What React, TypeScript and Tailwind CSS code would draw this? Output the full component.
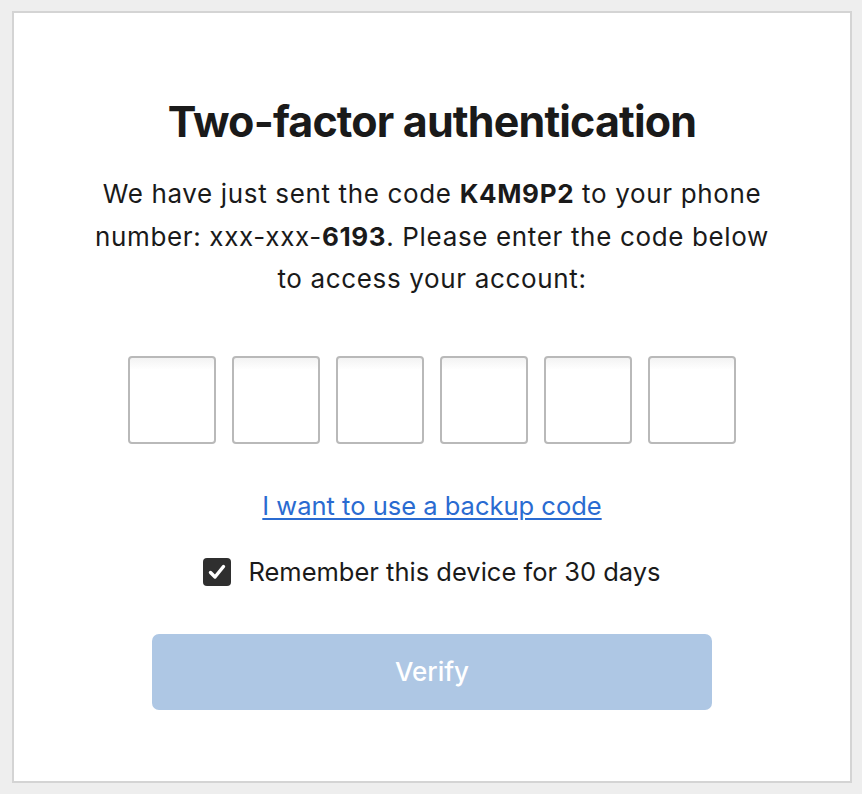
import React from "react";

export default function App() {
  const boxes = [0, 1, 2, 3, 4, 5];
  return (
    <div className="w-[862px] h-[794px] bg-[#eeeeee] pt-[11px] pl-[12px]" style={{ fontFamily: "Inter, 'Noto Sans', sans-serif" }}>
      <div className="w-[840px] h-[772px] bg-white border-2 border-[#d4d4d4] flex flex-col items-center pt-[82px]">
        <h1 className="text-[43px] leading-[52px] font-bold text-[#1a1a1a] tracking-[-0.02em]">Two-factor authentication</h1>
        <p className="mt-[26px] w-[690px] text-center text-[26px] leading-[42.5px] tracking-[0.025em] text-[#1a1a1a]">
          We have just sent the code <b className="font-bold">K4M9P2</b> to your phone number: xxx-xxx-<b className="font-bold">6193</b>. Please enter the code below to access your account:
        </p>
        <div className="mt-[55px] flex gap-[16px]">
          {boxes.map((i) => (
            <input
              key={i}
              type="text"
              maxLength={1}
              className="w-[88px] h-[88px] rounded-[4px] border-2 border-[#b9b9b9] bg-gradient-to-b from-[#f3f3f3] to-white to-[14%] outline-none text-center text-[32px]"
            />
          ))}
        </div>
        <a href="#" className="mt-[46px] text-[25.5px] leading-[32px] text-[#2a6bd1] underline underline-offset-[3px]">I want to use a backup code</a>
        <label className="mt-[34px] flex items-center gap-[17px] text-[25.5px] leading-[32px] text-[#1a1a1a]">
          <span className="w-[28px] h-[28px] rounded-[4px] bg-[#2f2f2f] flex items-center justify-center">
            <svg width="20" height="20" viewBox="0 0 20 20" fill="none">
              <path d="M3.5 10.5 L8 15 L16.5 4.5" stroke="white" strokeWidth="3.4" strokeLinecap="round" strokeLinejoin="round" />
            </svg>
          </span>
          Remember this device for 30 days
        </label>
        <button className="mt-[46px] w-[560px] h-[76px] rounded-[7px] bg-[#aec7e4] text-white text-[26px] font-medium">Verify</button>
      </div>
    </div>
  );
}
